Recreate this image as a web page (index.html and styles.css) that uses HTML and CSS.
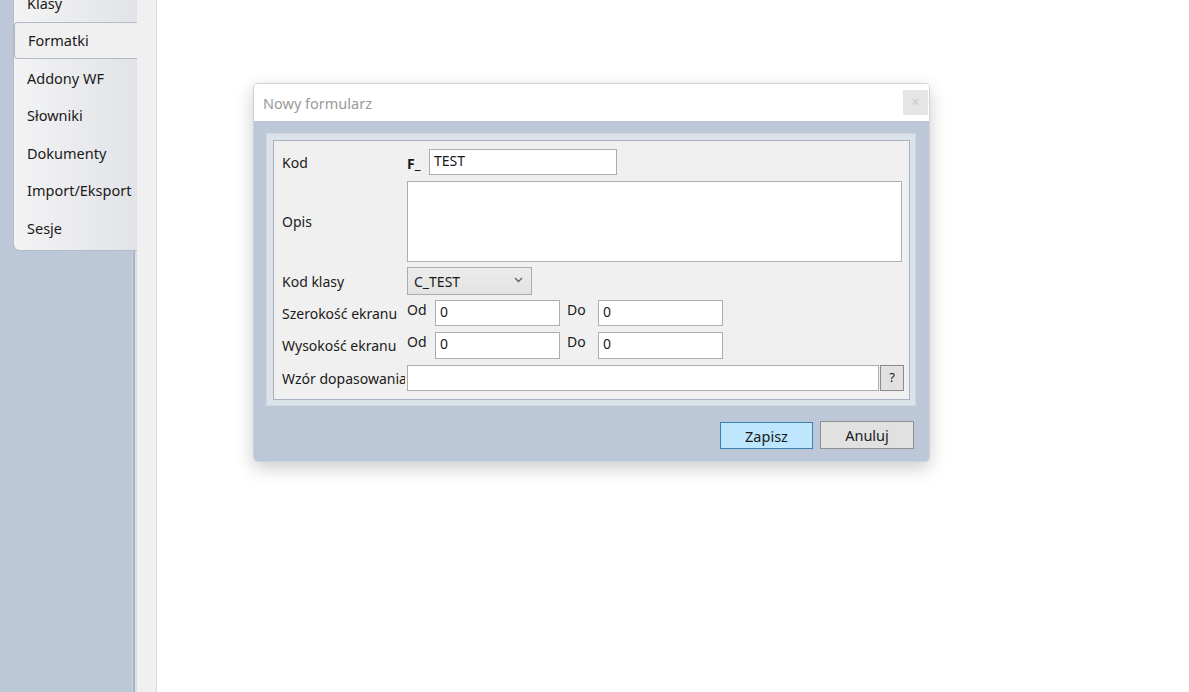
FILE: index.html
```html
<!DOCTYPE html>
<html lang="pl">
<head>
  <meta charset="UTF-8">
  <meta name="viewport" content="width=device-width, initial-scale=1.0">
  <title>Nowy formularz</title>
  <link rel="stylesheet" href="styles.css">
</head>
<body>
  <div class="app">
    <div class="sidebar">
      <div class="tabs">
        <div class="tab">Klasy</div>
        <div class="tab active">Formatki</div>
        <div class="tab">Addony WF</div>
        <div class="tab">Słowniki</div>
        <div class="tab">Dokumenty</div>
        <div class="tab">Import/Eksport</div>
        <div class="tab">Sesje</div>
      </div>
    </div>
    <div class="sidebar-edge"></div>
    <div class="strip"></div>

    <div class="main">
      <div class="dialog">
        <div class="dialog-title">
          <span>Nowy formularz</span>
          <div class="close">&times;</div>
        </div>
        <div class="dialog-body">
          <div class="frame">
            <div class="form">
              <div class="row row-kod">
                <div class="label">Kod</div>
                <b class="prefix">F_</b>
                <div class="input w-kod">TEST</div>
              </div>
              <div class="row row-opis">
                <div class="label">Opis</div>
                <div class="input textarea"></div>
              </div>
              <div class="row row-klasa">
                <div class="label">Kod klasy</div>
                <div class="select">
                  <span>C_TEST</span>
                  <svg width="9" height="6" viewBox="0 0 9 6"><path d="M1 1 L4.5 4.5 L8 1" fill="none" stroke="#606060" stroke-width="1.3"/></svg>
                </div>
              </div>
              <div class="row row-size">
                <div class="label">Szerokość ekranu</div>
                <span class="mini">Od</span>
                <div class="input w-num">0</div>
                <span class="mini mini-do">Do</span>
                <div class="input w-num">0</div>
              </div>
              <div class="row row-size row-h">
                <div class="label">Wysokość ekranu</div>
                <span class="mini">Od</span>
                <div class="input w-num">0</div>
                <span class="mini mini-do">Do</span>
                <div class="input w-num">0</div>
              </div>
              <div class="row row-wzor">
                <div class="label clip">Wzór dopasowania</div>
                <div class="input w-wzor"></div>
                <div class="qbtn">?</div>
              </div>
            </div>
          </div>
          <div class="buttons">
            <div class="btn primary">Zapisz</div>
            <div class="btn">Anuluj</div>
          </div>
        </div>
      </div>
    </div>
  </div>
</body>
</html>
```

FILE: styles.css
```css
* {
  margin: 0;
  padding: 0;
  box-sizing: border-box;
}

body {
  font-family: "Noto Sans", "Liberation Sans", sans-serif;
  font-size: 14px;
  color: #1a1a1a;
  background: #fff;
  overflow: hidden;
}

.app {
  display: flex;
  height: 692px;
}

.sidebar {
  width: 132px;
  background: #bcc8d8;
  position: relative;
}

.sidebar-edge {
  width: 5px;
  background: linear-gradient(to right, #ccd4df 0, #ccd4df 1px, #a9b3c1 1px, #a9b3c1 3px, #dadfe6 3px);
}

.strip {
  width: 20px;
  background: #f0f0f0;
  border-right: 1px solid #dadada;
}

/* tab list */
.tabs {
  position: absolute;
  top: -16px;
  left: 13px;
  width: 124px;
  padding-bottom: 4px;
  background: linear-gradient(to right, #f3f3f4, #e1e3e7);
  border-left: 1px solid #b3bcc8;
  border-bottom: 1px solid #b3bcc8;
  border-bottom-left-radius: 7px;
  z-index: 1;
}

.tab {
  height: 37.5px;
  line-height: 38px;
  padding-left: 13px;
  font-size: 14.5px;
}

.tab.active {
  background: #f0f0f0;
  border: 1px solid #b1bac6;
  border-right: none;
  border-radius: 4px 0 0 4px;
  line-height: 35px;
  height: 37px;
}

.main {
  flex: 1;
  padding: 83px 0 0 96px;
}

/* dialog */
.dialog {
  width: 677px;
  border: 1px solid #cdd2d8;
  border-radius: 4px;
  overflow: hidden;
  box-shadow: 0 6px 18px rgba(0, 0, 0, 0.2);
}

.dialog-title {
  height: 37px;
  background: #fff;
  display: flex;
  justify-content: space-between;
  align-items: center;
  padding: 0 1px 0 9px;
  color: #9a9a9a;
  font-size: 14.5px;
}

.close {
  width: 25px;
  height: 25px;
  background: #e5e5e5;
  color: #cacaca;
  text-align: center;
  line-height: 24px;
  font-size: 14px;
}

.dialog-body {
  background: #bcc8d8;
  padding: 12px 13px 12px 12px;
}

.frame {
  background: #dce2ea;
  border: 1px solid #cfd6e0;
  padding: 6px 5px 5px 6px;
}

.form {
  background: #f0f0f0;
  border: 1px solid #a8b1be;
  padding: 8px 5px 8px 8px;
}

.row {
  display: flex;
  align-items: center;
  height: 26px;
  margin-bottom: 6px;
}

.row:last-child {
  margin-bottom: 0;
}

.label {
  width: 125px;
  flex-shrink: 0;
}

.clip {
  width: 123px;
  margin-right: 2px;
  overflow: hidden;
  white-space: nowrap;
}

.prefix {
  width: 22px;
  font-weight: bold;
  padding-top: 3px;
}

.input {
  background: #fff;
  border: 1px solid #abadb3;
  height: 26px;
  padding: 1px 4px;
  line-height: 20px;
}

.w-kod {
  width: 188px;
}

.row-opis {
  height: 81px;
  margin-bottom: 5px;
}

.textarea {
  flex: 1;
  height: 81px;
  margin-right: 2px;
}

.row-klasa {
  height: 28px;
  margin-bottom: 5px;
}

.select {
  width: 125px;
  height: 28px;
  background: linear-gradient(#ececec, #e3e3e3);
  border: 1px solid #acacac;
  display: flex;
  align-items: center;
  justify-content: space-between;
  padding: 0 8px 0 6px;
}

.select svg {
  margin-bottom: 3px;
}

.mini {
  width: 28px;
  align-self: flex-start;
  line-height: 20px;
}

.mini-do {
  width: 31px;
  margin-left: 7px;
}

.w-num {
  width: 125px;
}

.row-h {
  height: 27px;
}

.row-h .input {
  height: 27px;
}

.w-wzor {
  flex: 1;
}

.qbtn {
  width: 24px;
  height: 26px;
  margin-left: 1px;
  background: #e1e1e1;
  border: 1px solid #8a8a8a;
  text-align: center;
  line-height: 23px;
  font-size: 13px;
}

.buttons {
  display: flex;
  justify-content: flex-end;
  gap: 7px;
  padding: 15px 2px 0 0;
}

.btn {
  width: 94px;
  height: 28px;
  background: #e1e1e1;
  border: 1px solid #8f8f8f;
  text-align: center;
  line-height: 26px;
  font-size: 14.5px;
}

.btn.primary {
  width: 93px;
  background: #bee6fd;
  border-color: #3c7fb1;
  margin-top: 1px;
  height: 27px;
}
```
